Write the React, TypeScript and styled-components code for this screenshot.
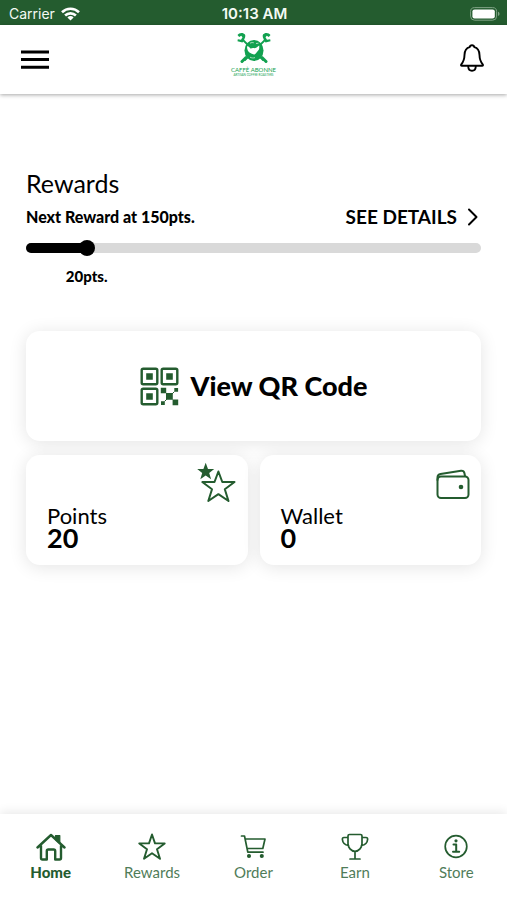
import React from "react";
import styled, { createGlobalStyle } from "styled-components";

const green = "#245c2f";

const GlobalStyle = createGlobalStyle`
  * { box-sizing: border-box; }
  body {
    margin: 0;
    background: #fff;
    color: #000;
    font-family: Lato, "Open Sans", sans-serif;
  }
  button { font: inherit; color: inherit; border: 0; background: none; padding: 0; cursor: pointer; }
  a { color: inherit; text-decoration: none; }
  svg { display: block; flex: none; }
`;

const Screen = styled.div`
  min-height: 100vh;
  display: flex;
  flex-direction: column;
`;

const StatusBar = styled.div`
  display: grid;
  grid-template-columns: 1fr auto 1fr;
  align-items: center;
  height: 25px;
  padding: 2px 7px 0 9px;
  background: ${green};
  color: #f4faf4;
  font-family: Inter, sans-serif;
  font-size: 14px;
  line-height: 20px;
`;

const Carrier = styled.span`
  display: flex;
  align-items: center;
  gap: 6px;
`;

const Clock = styled.span`
  font-size: 15px;
  font-weight: 600;
`;

const Battery = styled.span`
  justify-self: end;
`;

const Header = styled.header`
  display: grid;
  grid-template-columns: 1fr auto 1fr;
  align-items: start;
  height: 69px;
  padding: 7px 20px 0;
  box-shadow: 0 1px 4px rgba(0, 0, 0, 0.35);
`;

const IconButton = styled.button<{ $end?: boolean }>`
  justify-self: ${(p) => (p.$end ? "end" : "start")};
  margin-top: 11px;
`;

const Brand = styled.div`
  display: flex;
  flex-direction: column;
  align-items: center;
  color: #12a150;
`;

const BrandName = styled.span`
  font-size: 6px;
  line-height: 7px;
  font-weight: 400;
`;

const BrandTag = styled.span`
  font-size: 3px;
  line-height: 4px;
`;

const Main = styled.main`
  flex: 1;
  display: flex;
  flex-direction: column;
  padding: 75px 26px 24px;
`;

const Title = styled.h1`
  margin: 0;
  font-size: 25px;
  line-height: 28px;
  font-weight: 400;
`;

const RewardRow = styled.div`
  display: flex;
  align-items: center;
  justify-content: space-between;
  height: 39px;
`;

const RewardLabel = styled.label`
  font-size: 16px;
  line-height: 20px;
  font-weight: 900;
`;

const DetailsLink = styled.a`
  display: flex;
  align-items: center;
  gap: 10px;
  padding-right: 2px;
  font-size: 19px;
  line-height: 24px;
  font-weight: 700;
`;

const Slider = styled.div`
  display: grid;
  align-items: center;
  height: 24px;
  > * { grid-area: 1 / 1; }
`;

const Track = styled.div`
  height: 10px;
  border-radius: 5px;
  background: #d9d9d9;
  overflow: hidden;
`;

const Fill = styled.div`
  height: 100%;
  background: #000;
`;

const Range = styled.input`
  appearance: none;
  width: calc(100% + 16px);
  height: 16px;
  margin: 0 -8px;
  background: transparent;
  &::-webkit-slider-thumb {
    appearance: none;
    width: 16px;
    height: 16px;
    border-radius: 50%;
    background: #000;
  }
`;

const Current = styled.output`
  width: fit-content;
  margin-top: 6px;
  transform: translateX(-50%);
  font-size: 15px;
  line-height: 20px;
  font-weight: 900;
`;

const Cards = styled.div`
  display: grid;
  grid-template-columns: 1fr 1fr;
  gap: 14px 12px;
  margin-top: 45px;
`;

const Card = styled.button`
  height: 110px;
  border-radius: 14px;
  background: #fff;
  box-shadow: 0 2px 18px rgba(0, 0, 0, 0.11);
`;

const QrCard = styled(Card)`
  grid-column: 1 / -1;
  display: flex;
  align-items: center;
  justify-content: center;
  gap: 12px;
  font-size: 27px;
  line-height: 32px;
  font-weight: 900;
`;

const BalanceCard = styled(Card)`
  display: flex;
  justify-content: space-between;
  align-items: flex-start;
  padding: 7px 11px 16px 21px;
  text-align: left;
`;

const Balance = styled.span`
  align-self: flex-end;
  display: flex;
  flex-direction: column;
`;

const BalanceName = styled.span`
  font-size: 22px;
  line-height: 22px;
`;

const BalanceValue = styled.strong`
  font-size: 27px;
  line-height: 22px;
  font-weight: 700;
`;

const Nav = styled.nav`
  position: sticky;
  bottom: 0;
  display: grid;
  grid-template-columns: repeat(5, 1fr);
  height: 86px;
  padding-top: 19px;
  background: #fff;
  box-shadow: 0 -2px 10px rgba(0, 0, 0, 0.09);
`;

const NavItem = styled.a<{ $active?: boolean }>`
  display: flex;
  flex-direction: column;
  align-items: center;
  gap: 1px;
  color: ${green};
  font-size: 15px;
  line-height: 20px;
  font-weight: ${(p) => (p.$active ? 900 : 400)};
`;

const NavText = styled.span<{ $active?: boolean }>`
  opacity: ${(p) => (p.$active ? 1 : 0.8)};
`;

const stroke = { fill: "none", stroke: "currentColor", strokeLinecap: "round", strokeLinejoin: "round" } as const;

const WifiIcon = () => (
  <svg width="19" height="14" viewBox="0 0 19 14" fill="none" stroke="#fff" strokeWidth="2.6">
    <path d="M1 5.2a12.2 12.2 0 0 1 17 0M4.1 8.5a7.8 7.8 0 0 1 10.8 0" />
    <path d="M9.5 13.5 6.4 10.5a4.5 4.5 0 0 1 6.2 0Z" fill="#fff" stroke="none" />
  </svg>
);

const BatteryIcon = () => (
  <svg width="30" height="14" viewBox="0 0 30 14">
    <rect x="0.6" y="0.6" width="26" height="12.6" rx="4" fill="none" stroke="#7fa385" />
    <rect x="2.4" y="2.4" width="22.4" height="9" rx="2.2" fill="#fff" />
    <path d="M28 4.8c2 .6 2 3.6 0 4.2Z" fill="#7fa385" />
  </svg>
);

const MenuIcon = () => (
  <svg width="30" height="32" viewBox="0 0 30 32" {...stroke} strokeWidth="3" strokeLinecap="butt">
    <path d="M1 9h28M1 16.5h28M1 24.2h28" />
  </svg>
);

const BellIcon = () => (
  <svg width="30" height="30" viewBox="0 0 30 30" {...stroke} strokeWidth="1.9">
    <path d="M15 2.3c-1.400 0-2.1.8-2.3 1.900C9 5.2 7.6 8.3 7.500 12c-.1 5.6-1.500 7.3-3.200 9.3-.6.8-.3 1.500.6 1.500h20.200c.9 0 1.200-.7.6-1.500-1.700-2-3.100-3.700-3.200-9.300-.1-3.700-1.500-6.800-5.200-7.800-.2-1.100-.9-1.900-2.300-1.900Z" />
    <path d="M11.2 23.5c.2 3 1.700 4.300 3.800 4.300s3.600-1.300 3.800-4.300" />
  </svg>
);

const LogoIcon = () => (
  <svg width="38" height="34" viewBox="0 0 38 34" fill="#12a150">
    <g fill="none" stroke="#12a150" strokeLinecap="round">
      <path d="M8 8 28 28M30 8 10 28" strokeWidth="1.800" />
      <path d="m7 29.500 4-4M31 29.500l-4-4" strokeWidth="3" />
    </g>
    <path d="M2.500 3C4 .4 8.500.2 10 2.600c.9 1.800-.2 3.700-1 5.400L7.500 10.500 2.500 9.300l.3-2 3.200.5 1.500-2.500-1.300-1.600-2 1.300Z" />
    <path d="M35.500 3C34 .4 29.500.2 28 2.600c-.9 1.800.2 3.700 1 5.400l1.500 2.500 5-1.200-.3-2-3.200.5-1.500-2.500 1.300-1.600 2 1.300Z" />
    <ellipse cx="19" cy="18.500" rx="9.500" ry="10.500" />
    <path d="M12 14.500c1.200-.8 2.300.6 3.200 1.800 1.300.6 2-.7 3.300-.3 1.600.6 3.400-.6 5.700-2.500.2 2.400.2 4-1.200 5.300-1.300 1.200-1.800 3-3.600 3.700-1.300.2-2-.6-3.600-1.200-2.600-.8-3.800-3.500-3.800-6.800Z" fill="#fff" />
    <path d="M15 11.200c1.500-.8 2.600-.7 3.800-.4M21 11.500l2.500-.3M15 25.200c1.500.8 3.500 1 5 .4" fill="none" stroke="#a8dcbb" />
  </svg>
);

const ChevronIcon = () => (
  <svg width="12" height="18" viewBox="0 0 12 18" {...stroke} strokeWidth="2">
    <path d="m2 1.5 7.5 7.5L2 16.5" />
  </svg>
);

const QrIcon = () => (
  <svg width="39" height="39" viewBox="0 0 39 39" fill={green}>
    <g fill="none" stroke={green} strokeWidth="2.4">
      <rect x="1.7" y="1.7" width="15.6" height="15.6" rx="1.5" />
      <rect x="21.7" y="1.7" width="15.6" height="15.6" rx="1.5" />
      <rect x="1.7" y="21.7" width="15.6" height="15.6" rx="1.5" />
    </g>
    <path d="M6.2 6.2h6.600v6.600H6.200zM26.200 6.200h6.600v6.600h-6.600zM6.200 26.200h6.600v6.600H6.200zM20.800 20.800h5.400v5.400h-5.400zM26 26h6.800v6.800H26zM34.300 21h3.800v3.800h-3.800zM21 34.300h3.800v3.800H21zM32.600 32.600h5.600v5.600h-5.600z" />
    <path d="M32 27l2.400-2.400M27 32l-2.400 2.400" stroke={green} />
  </svg>
);

const PointsIcon = () => (
  <svg width="42" height="42" viewBox="0 0 42 42">
    <path d="M10.7.8 13 7h6.200l-5 4 1.900 6.200-5.400-3.800-5.400 3.800 1.900-6.200-5-4h6.200Z" fill={green} />
    <path d="M23.4 9.500 27.300 20H39.500L29.800 27.300 33.500 39 23.400 32.200 13.300 39 17 27.300 7.300 20H19.500Z" fill="none" stroke={green} strokeWidth="2" strokeLinejoin="round" />
  </svg>
);

const WalletIcon = () => (
  <svg width="34" height="38" viewBox="0 0 34 38" fill="none" stroke={green} strokeWidth="2" strokeLinecap="round">
    <rect x="1.5" y="14.5" width="31" height="21.5" rx="3.5" />
    <path d="M1.5 18v-2.500c0-2.200 1-3.300 3-3.600L25 8.800c1.800-.2 3 .6 3.400 2.200l.6 3" />
    <circle cx="25" cy="25" r="2.300" fill={green} stroke="none" />
  </svg>
);

const HomeIcon = () => (
  <svg width="30" height="28" viewBox="0 0 30 28" {...stroke} strokeWidth="2.400">
    <path d="M1.500 14.500 15 2l13.500 12.500M5 12.500V25q0 1.500 1.500 1.500h4.300V18q0-1.500 1.500-1.500h5.400q1.500 0 1.500 1.500v8.500h4.300Q25 26.500 25 25V12.500" />
    <path d="M19.500 2.500h4.300v8l-4.300-4Z" fill="currentColor" strokeWidth="1.200" />
  </svg>
);

const StarIcon = () => (
  <svg width="28" height="28" viewBox="0 0 28 28" {...stroke} strokeWidth="1.9">
    <path d="M14 1.500 17 10.400H26.700L19 16.200 22 25.800 14 20.300 6 25.800 9 16.200 1.300 10.400H11Z" />
  </svg>
);

const CartIcon = () => (
  <svg width="28" height="28" viewBox="0 0 28 28" {...stroke} strokeWidth="1.7">
    <path d="M2.500 3h3l3.300 16.200H24M6.300 6H26l-2.200 9.500H8.300" />
    <circle cx="10" cy="23" r="1.200" fill="currentColor" />
    <circle cx="22.800" cy="23" r="1.200" fill="currentColor" />
  </svg>
);

const TrophyIcon = () => (
  <svg width="28" height="28" viewBox="0 0 28 28" {...stroke} strokeWidth="1.7">
    <path d="M7 3q0-1.500 1.500-1.500h11q1.500 0 1.500 1.500V10.500c0 4-3 7.800-7 7.800S7 14.500 7 10.500ZM7 4.500H3Q1.200 4.500 1.400 6.500c.3 3.500 2.600 5.500 6.200 6M21 4.500h4q1.800 0 1.600 2c-.3 3.500-2.600 5.500-6.200 6M14 18.500v7M9 26h10" />
  </svg>
);

const InfoIcon = () => (
  <svg width="28" height="28" viewBox="0 0 28 28" {...stroke} strokeWidth="1.7">
    <circle cx="14" cy="13.500" r="10.800" />
    <path d="M11.500 11.500H14.200v7M11 18.700h6.200" strokeWidth="2" />
    <circle cx="14" cy="7.800" r="1.600" fill="currentColor" stroke="none" />
  </svg>
);

const tabs = [
  { name: "Home", Icon: HomeIcon },
  { name: "Rewards", Icon: StarIcon },
  { name: "Order", Icon: CartIcon },
  { name: "Earn", Icon: TrophyIcon },
  { name: "Store", Icon: InfoIcon },
];

const balances = [
  { name: "Points", value: 20, Icon: PointsIcon },
  { name: "Wallet", value: 0, Icon: WalletIcon },
];

export default function App() {
  const goal = 150;
  const [points, setPoints] = React.useState(20);
  const percent = `${(points / goal) * 100}%`;

  return (
    <Screen>
      <GlobalStyle />
      <StatusBar>
        <Carrier>Carrier <WifiIcon /></Carrier>
        <Clock>10:13 AM</Clock>
        <Battery><BatteryIcon /></Battery>
      </StatusBar>
      <Header>
        <IconButton aria-label="Menu"><MenuIcon /></IconButton>
        <Brand>
          <LogoIcon />
          <BrandName>CAFFÈ ABONNE</BrandName>
          <BrandTag>ARTISAN COFFEE ROASTERS</BrandTag>
        </Brand>
        <IconButton $end aria-label="Notifications"><BellIcon /></IconButton>
      </Header>
      <Main>
        <Title>Rewards</Title>
        <RewardRow>
          <RewardLabel htmlFor="progress">Next Reward at 150pts.</RewardLabel>
          <DetailsLink href="#details">SEE DETAILS <ChevronIcon /></DetailsLink>
        </RewardRow>
        <Slider>
          <Track><Fill style={{ width: percent }} /></Track>
          <Range
            id="progress"
            type="range"
            min={0}
            max={goal}
            value={points}
            onChange={(e) => setPoints(Number(e.target.value))}
          />
        </Slider>
        <Current htmlFor="progress" style={{ marginLeft: percent }}>{points}pts.</Current>
        <Cards>
          <QrCard><QrIcon />View QR Code</QrCard>
          {balances.map(({ name, value, Icon }) => (
            <BalanceCard key={name}>
              <Balance>
                <BalanceName>{name}</BalanceName>
                <BalanceValue>{value}</BalanceValue>
              </Balance>
              <Icon />
            </BalanceCard>
          ))}
        </Cards>
      </Main>
      <Nav aria-label="Main">
        {tabs.map(({ name, Icon }, i) => (
          <NavItem key={name} href={`#${name.toLowerCase()}`} $active={i === 0} aria-current={i === 0 ? "page" : undefined}>
            <Icon />
            <NavText $active={i === 0}>{name}</NavText>
          </NavItem>
        ))}
      </Nav>
    </Screen>
  );
}
